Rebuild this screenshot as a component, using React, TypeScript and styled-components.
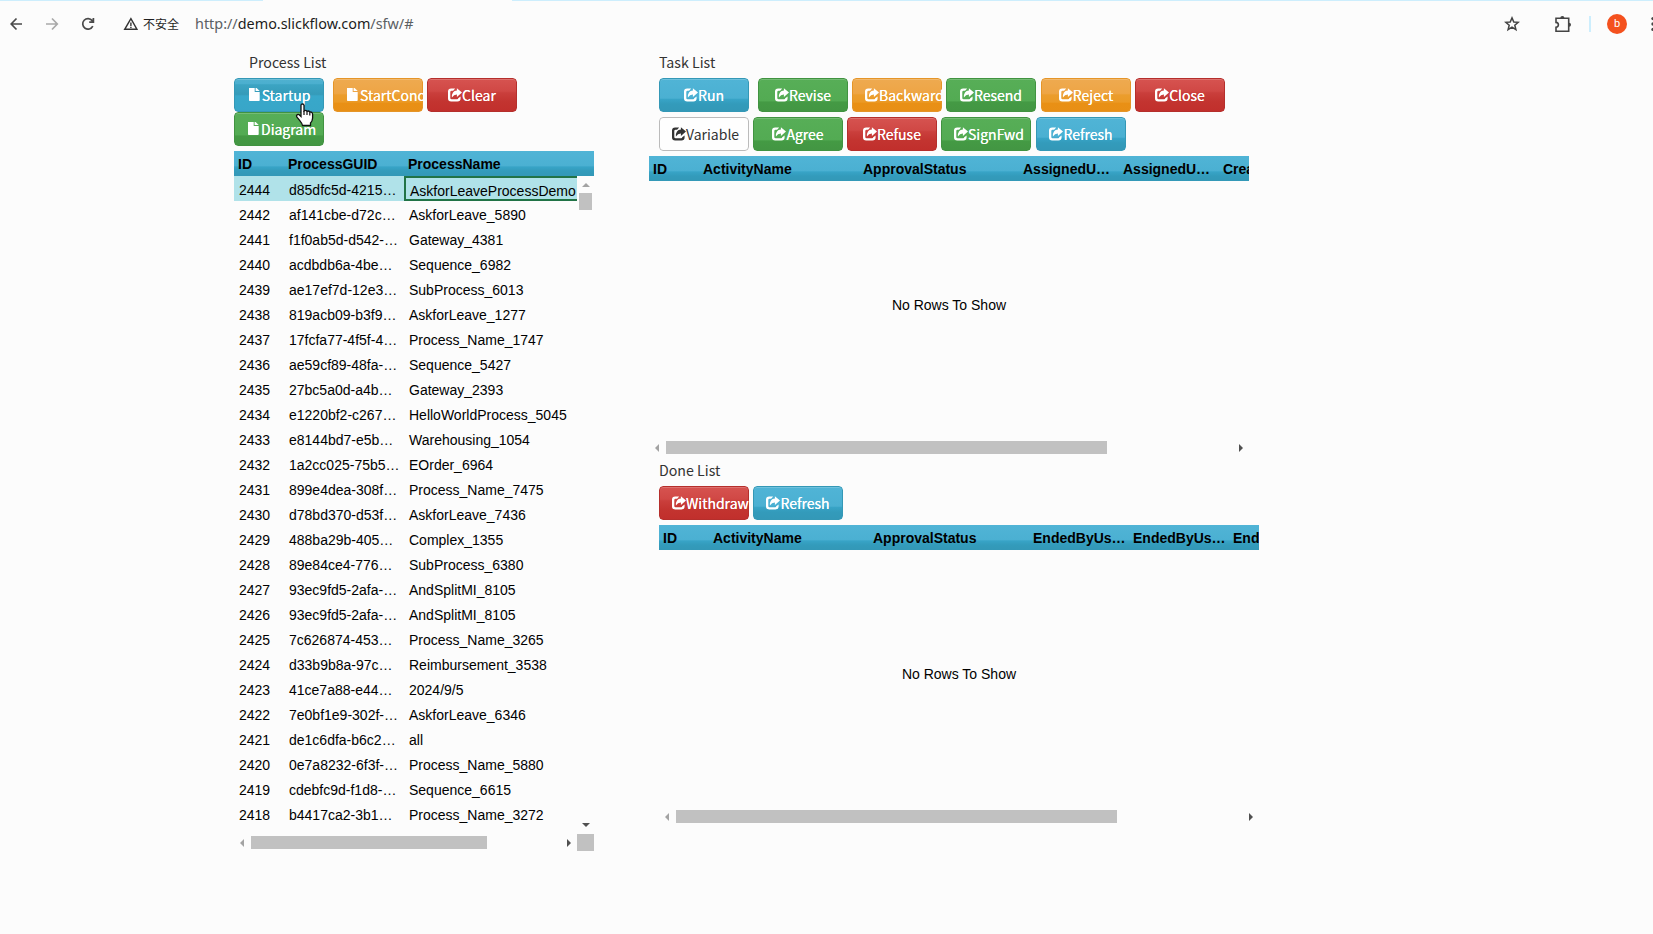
import React from "react";
import styled, { createGlobalStyle, css } from "styled-components";

const GlobalStyle = createGlobalStyle`
  * { box-sizing: border-box; }
  html, body { margin: 0; padding: 0; background: #fcfcfc; overflow: hidden; }
`;

const uiFont = `"Noto Sans CJK SC", "Open Sans", sans-serif`;
const gridFont = `"Liberation Sans", Arial, sans-serif`;

const Page = styled.div`
  position: relative;
  width: 1653px;
  height: 934px;
  overflow: hidden;
  background: #fcfcfc;
  font-family: ${uiFont};
`;

const TabStrip = styled.div`
  display: flex;
  justify-content: space-between;
  height: 1px;
`;
const StripPart = styled.div<{ $w: number }>`
  width: ${(p) => p.$w}px;
  background: #cdeefd;
`;

const BrowserBar = styled.header`
  display: flex;
  align-items: center;
  height: 47px;
  padding: 0 0 2px 8px;
  svg { display: block; flex: none; }
`;
const NavIcons = styled.div`
  display: flex;
  align-items: center;
  gap: 20px;
  width: 115px;
`;
const Insecure = styled.span`
  width: 57px;
  padding-left: 5px;
  font: 12px/20px "Noto Sans CJK SC", sans-serif;
  color: #1f1f1f;
  white-space: nowrap;
`;
const Address = styled.div`
  flex: 1;
  font: 14.4px/20px "Noto Sans", sans-serif;
  color: #5b5f63;
  b { font-weight: 400; color: #1c1c1c; }
`;
const BarActions = styled.div`
  display: flex;
  align-items: center;
  width: 149px;
`;
const Divider = styled.i`
  flex: none;
  width: 2px;
  height: 16px;
  margin: 0 16px 0 17px;
  background: #cdeefd;
`;
const Avatar = styled.span`
  flex: none;
  width: 20px;
  height: 20px;
  border-radius: 50%;
  background: #f4511e;
  color: #fff;
  font: 11px/20px Roboto, sans-serif;
  text-align: center;
  margin-right: 24px;
`;

const Columns = styled.main`
  display: flex;
  gap: 55px;
  padding-left: 234px;
`;
const Left = styled.section`
  width: 360px;
`;
const Right = styled.section`
  width: 610px;
`;
const Title = styled.h2<{ $indent: number }>`
  height: 30px;
  margin: 0;
  padding-left: ${(p) => p.$indent}px;
  font: 400 14.2px/29px ${uiFont};
  color: #333;
`;
const ButtonRow = styled.div<{ $indent?: number; $bottom?: number }>`
  display: flex;
  gap: 4px;
  padding-left: ${(p) => p.$indent ?? 0}px;
  margin-bottom: ${(p) => p.$bottom ?? 5}px;
`;

type Tone = "info" | "hover" | "success" | "warning" | "danger" | "plain";
const tones: Record<Tone, ReturnType<typeof css>> = {
  info: css`background: linear-gradient(#50b4d6, #4bb0d2 60%, #38a4c7 63%, #339bbb 78%, #3398b7); border-color: #3498b6;`,
  hover: css`background: linear-gradient(#50b1d0, #4bafcf 14%, #3ca4c3 18%, #359bb9 48%, #38a8ca 53%, #38a6c8); border-color: #3498b6;`,
  success: css`background: linear-gradient(#57ae57, #53ab53 68%, #449a44 72%, #439643); border-color: #419341;`,
  warning: css`background: linear-gradient(#eeaa50, #eea545 45%, #eb9d2d 50%, #eb9a26 72%, #e99015 76%, #e88f16); border-color: #e59528;`,
  danger: css`background: linear-gradient(#d65350, #d04845 38%, #ca3f3c 43%, #c33430 70%, #c12f2c); border-color: #b52f2c;`,
  plain: css`background: #fefefe; border-color: #bbb; color: #333; text-shadow: none; box-shadow: none;`,
};

const ToolButton = styled.button<{ $tone: Tone; $after?: number }>`
  display: flex;
  align-items: center;
  justify-content: safe center;
  width: 90px;
  height: 34px;
  flex: none;
  margin: 0 ${(p) => p.$after ?? 0}px 0 0;
  padding: 0 12px;
  border: 1px solid;
  border-radius: 4px;
  box-shadow: inset 0 1px 0 rgba(255, 255, 255, 0.18);
  clip-path: inset(0 round 4px);
  color: #fff;
  font: 400 14px/20px ${uiFont};
  text-shadow: 0 0 0.6px currentColor;
  white-space: nowrap;
  ${(p) => tones[p.$tone]}
  svg { display: block; flex: none; margin-top: -1px; }
`;

const FileIcon = () => (
  <svg width="14" height="14" viewBox="0 0 14 14" fill="currentColor">
    <path d="M1 0H6.7V4.9H11.7V13.2Q11.7 14 10.9 14H1.7Q1 14 1 13.2ZM7.6 0L11.7 4.1H7.6Z" transform="translate(0 -1)" />
  </svg>
);
const ShareIcon = () => (
  <svg width="14" height="14" viewBox="0 0 14 14" fill="currentColor">
    <path d="M7.2 .4H3.2Q0 .4 0 3.6V10.2Q0 13.4 3.2 13.4H9.4Q12.6 13.4 12.6 10.2V8.4L10.2 10.3Q10.2 11.2 9.1 11.2H3.6Q2.3 11.2 2.3 9.9V4.1Q2.3 2.8 3.6 2.8H5.1Z" />
    <path d="M8.9 .2L14 4.6 8.9 8.9V6.5Q5.9 6.4 3.9 9.6 3.6 2.9 8.9 2.6Z" />
  </svg>
);

type Item = { label: string; tone: Tone; file?: boolean; after?: number };
const Buttons = ({ items }: { items: Item[] }) => (
  <>
    {items.map((b) => (
      <ToolButton key={b.label} $tone={b.tone} $after={b.after}>
        {b.file ? <FileIcon /> : <ShareIcon />}
        {b.label}
      </ToolButton>
    ))}
  </>
);

const Grid = styled.div<{ $w: number; $indent?: number }>`
  width: ${(p) => p.$w}px;
  margin-left: ${(p) => p.$indent ?? 0}px;
  font-family: ${gridFont};
  font-size: 14px;
  color: #000;
`;
const HeaderRow = styled.div`
  display: flex;
  height: 25px;
  overflow: hidden;
  background: linear-gradient(#50b4d6, #4bb0d2 60%, #38a4c7 63%, #339bbb 80%, #3398b7);
`;
const HeaderCell = styled.div<{ $w: number }>`
  flex: none;
  width: ${(p) => p.$w}px;
  padding: 0 0 0 4px;
  font-weight: 700;
  line-height: 26px;
  white-space: nowrap;
`;
const Body = styled.div`
  display: flex;
  height: 658px;
`;
const Rows = styled.div`
  width: 343px;
  height: 650px;
`;
const Row = styled.div<{ $on: boolean }>`
  display: flex;
  height: 25px;
  background: ${(p) => (p.$on ? "#b0e2e9" : "transparent")};
`;
const Cell = styled.div<{ $w: number; $focus?: boolean }>`
  flex: none;
  width: ${(p) => p.$w}px;
  padding: 0 0 0 5px;
  line-height: 28px;
  white-space: nowrap;
  ${(p) => p.$focus && css`
    border: 2px solid #217346;
    border-right: 0;
    padding: 0 0 0 4px;
    line-height: 26px;
  `}
`;
const VScroll = styled.div`
  display: flex;
  flex-direction: column;
  align-items: center;
  width: 17px;
  padding: 7px 0;
  svg { display: block; }
`;
const VThumb = styled.div`
  width: 13px;
  height: 17px;
  margin: 6px 0 auto;
  background: #c1c1c1;
`;
const HScroll = styled.div`
  display: flex;
  align-items: center;
  height: 17px;
  svg { display: block; flex: none; }
`;
const HThumb = styled.div<{ $w: number }>`
  width: ${(p) => p.$w}px;
  height: 13px;
  margin: 0 auto 0 7px;
  background: #c1c1c1;
`;
const HTrack = styled.div`
  display: flex;
  align-items: center;
  flex: 1;
  padding: 0 6px;
`;
const Corner = styled.div`
  width: 17px;
  height: 17px;
  background: #c1c1c1;
`;
const Empty = styled.div`
  display: flex;
  align-items: center;
  justify-content: center;
  height: 258px;
  padding-bottom: 11px;
`;

const arrows = {
  left: [4, 8, "M4 0V8L0 4Z", "#a3a3a3"],
  right: [4, 8, "M0 0V8L4 4Z", "#505050"],
  up: [8, 4, "M0 4H8L4 0Z", "#a3a3a3"],
  down: [8, 4, "M0 0H8L4 4Z", "#505050"],
} as const;
const Arrow = ({ dir }: { dir: keyof typeof arrows }) => {
  const [w, h, d, fill] = arrows[dir];
  return <svg width={w} height={h} viewBox={`0 0 ${w} ${h}`}><path d={d} fill={fill} /></svg>;
};

const Pointer = styled.svg`
  position: absolute;
  left: 295px;
  top: 103px;
`;

const processes = [
  ["2444", "d85dfc5d-4215…", "AskforLeaveProcessDemo"],
  ["2442", "af141cbe-d72c…", "AskforLeave_5890"],
  ["2441", "f1f0ab5d-d542-…", "Gateway_4381"],
  ["2440", "acdbdb6a-4be…", "Sequence_6982"],
  ["2439", "ae17ef7d-12e3…", "SubProcess_6013"],
  ["2438", "819acb09-b3f9…", "AskforLeave_1277"],
  ["2437", "17fcfa77-4f5f-4…", "Process_Name_1747"],
  ["2436", "ae59cf89-48fa-…", "Sequence_5427"],
  ["2435", "27bc5a0d-a4b…", "Gateway_2393"],
  ["2434", "e1220bf2-c267…", "HelloWorldProcess_5045"],
  ["2433", "e8144bd7-e5b…", "Warehousing_1054"],
  ["2432", "1a2cc025-75b5…", "EOrder_6964"],
  ["2431", "899e4dea-308f…", "Process_Name_7475"],
  ["2430", "d78bd370-d53f…", "AskforLeave_7436"],
  ["2429", "488ba29b-405…", "Complex_1355"],
  ["2428", "89e84ce4-776…", "SubProcess_6380"],
  ["2427", "93ec9fd5-2afa-…", "AndSplitMI_8105"],
  ["2426", "93ec9fd5-2afa-…", "AndSplitMI_8105"],
  ["2425", "7c626874-453…", "Process_Name_3265"],
  ["2424", "d33b9b8a-97c…", "Reimbursement_3538"],
  ["2423", "41ce7a88-e44…", "2024/9/5"],
  ["2422", "7e0bf1e9-302f-…", "AskforLeave_6346"],
  ["2421", "de1c6dfa-b6c2…", "all"],
  ["2420", "0e7a8232-6f3f-…", "Process_Name_5880"],
  ["2419", "cdebfc9d-f1d8-…", "Sequence_6615"],
  ["2418", "b4417ca2-3b1…", "Process_Name_3272"],
];

const EmptyGrid = ({ headers, indent }: { headers: string[]; indent?: number }) => (
  <Grid $w={600} $indent={indent}>
    <HeaderRow>
      {headers.map((h, i) => (
        <HeaderCell key={i} $w={[50, 160, 160, 100, 100, 100][i]}>{h}</HeaderCell>
      ))}
    </HeaderRow>
    <Empty>No Rows To Show</Empty>
    <HScroll>
      <HTrack><Arrow dir="left" /><HThumb $w={441} /><Arrow dir="right" /></HTrack>
    </HScroll>
  </Grid>
);

export default function App() {
  return (
    <Page>
      <GlobalStyle />
      <TabStrip><StripPart $w={263} /><StripPart $w={1141} /></TabStrip>
      <BrowserBar>
        <NavIcons>
          <svg width="16" height="16" viewBox="0 0 16 16" fill="none" stroke="#4a4a4a" strokeWidth="1.7"><path d="M14 8H3M8.5 2.5L3.2 8 8.5 13.5" /></svg>
          <svg width="16" height="16" viewBox="0 0 16 16" fill="none" stroke="#a9a9a9" strokeWidth="1.7"><path d="M2 8H13M8 2.5L13.3 8 8 13.5" /></svg>
          <svg width="16" height="16" viewBox="0 0 16 16" fill="none" stroke="#4a4a4a" strokeWidth="1.7"><path d="M12.8 10.2A5.3 5.3 0 1 1 12.2 4.6L13.4 6M13.4 2V6.2H9.2" /></svg>
        </NavIcons>
        <svg width="15" height="14" viewBox="0 0 15 14" fill="none" stroke="#333" strokeWidth="1.4"><path d="M7.9 1.7L14 12.3H1.7ZM7.9 5.5V9M7.9 9.7V11" /></svg>
        <Insecure>不安全</Insecure>
        <Address>http://<b>demo.slickflow.com</b>/sfw/#</Address>
        <BarActions>
          <svg width="16" height="16" viewBox="0 0 16 16" fill="none" stroke="#444" strokeWidth="1.5"><path d="M8 1.9L9.8 6 14.2 6.3 10.8 9.2 11.9 13.6 8 11.2 4.1 13.6 5.2 9.2 1.8 6.3 6.2 6Z" /></svg>
          <svg width="18" height="18" viewBox="0 0 18 18" fill="none" stroke="#444" strokeWidth="1.6" style={{ marginLeft: 34 }}><path d="M2 3.3H14.7V16.2H2V12.2Q4.4 12 4.4 9.8T2 7.4Z" /><path d="M6.3 3A2 2 0 0 1 10.4 3ZM15 7.8A2 2 0 0 1 15 11.8Z" fill="#444" stroke="none" /></svg>
          <Divider />
          <Avatar>b</Avatar>
          <svg width="4" height="16" viewBox="0 0 4 16" fill="#444"><circle cx="2" cy="2.6" r="1.7" /><circle cx="2" cy="8" r="1.7" /><circle cx="2" cy="13.4" r="1.7" /></svg>
        </BarActions>
      </BrowserBar>
      <Columns>
        <Left>
          <Title $indent={15}>Process List</Title>
          <ButtonRow $bottom={0}>
            <Buttons items={[
              { label: "Startup", tone: "hover", file: true, after: 5 },
              { label: "StartCond", tone: "warning", file: true },
              { label: "Clear", tone: "danger" },
            ]} />
          </ButtonRow>
          <ButtonRow>
            <Buttons items={[{ label: "Diagram", tone: "success", file: true }]} />
          </ButtonRow>
          <Grid $w={360}>
            <HeaderRow>
              <HeaderCell $w={50}>ID</HeaderCell>
              <HeaderCell $w={120}>ProcessGUID</HeaderCell>
              <HeaderCell $w={190}>ProcessName</HeaderCell>
            </HeaderRow>
            <Body>
              <Rows>
                {processes.map(([id, guid, name], i) => (
                  <Row key={id} $on={i === 0}>
                    <Cell $w={50}>{id}</Cell>
                    <Cell $w={120}>{guid}</Cell>
                    <Cell $w={173} $focus={i === 0}>{name}</Cell>
                  </Row>
                ))}
              </Rows>
              <VScroll><Arrow dir="up" /><VThumb /><Arrow dir="down" /></VScroll>
            </Body>
            <HScroll>
              <HTrack><Arrow dir="left" /><HThumb $w={236} /><Arrow dir="right" /></HTrack>
              <Corner />
            </HScroll>
          </Grid>
        </Left>
        <Right>
          <Title $indent={10}>Task List</Title>
          <ButtonRow $indent={10}>
            <Buttons items={[
              { label: "Run", tone: "info", after: 5 },
              { label: "Revise", tone: "success" },
              { label: "Backward", tone: "warning" },
              { label: "Resend", tone: "success", after: 1 },
              { label: "Reject", tone: "warning" },
              { label: "Close", tone: "danger" },
            ]} />
          </ButtonRow>
          <ButtonRow $indent={10}>
            <Buttons items={[
              { label: "Variable", tone: "plain" },
              { label: "Agree", tone: "success" },
              { label: "Refuse", tone: "danger" },
              { label: "SignFwd", tone: "success", after: 1 },
              { label: "Refresh", tone: "info" },
            ]} />
          </ButtonRow>
          <EmptyGrid headers={["ID", "ActivityName", "ApprovalStatus", "AssignedU…", "AssignedU…", "Crea"]} />
          <Title $indent={10}>Done List</Title>
          <ButtonRow $indent={10}>
            <Buttons items={[
              { label: "Withdraw", tone: "danger" },
              { label: "Refresh", tone: "info" },
            ]} />
          </ButtonRow>
          <EmptyGrid indent={10} headers={["ID", "ActivityName", "ApprovalStatus", "EndedByUs…", "EndedByUs…", "End"]} />
        </Right>
      </Columns>
      <Pointer width="19" height="24" viewBox="0 0 19 24">
        <path d="M6 13.5V2.5Q6 1 7.5 1T9 2.5V8Q10.8 6.7 12 8.3 13.8 7.4 14.8 9.1 17.5 8.6 17.6 11.3V15Q17.5 18 15.5 20V22.5H7.5Q7.2 20.5 4.8 17.6L1.8 14Q1 12.5 2.3 11.6 3.6 11 4.7 12.2Z" fill="#fff" stroke="#111" strokeWidth="1.3" />
        <path d="M9 8V12M12 8.5V12M14.8 9.3V12.5" stroke="#111" strokeWidth="1.2" />
      </Pointer>
    </Page>
  );
}
